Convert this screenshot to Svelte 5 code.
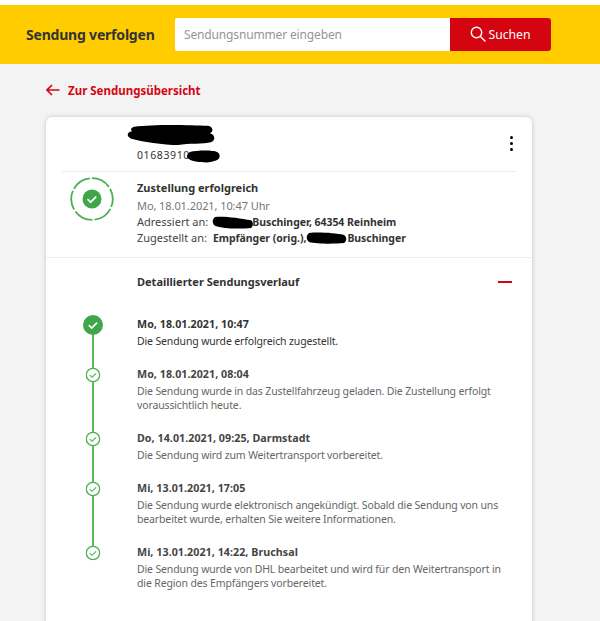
<script>
  const events = [
    { head: 'Mo, 18.01.2021, 10:47', lines: ['Die Sendung wurde erfolgreich zugestellt.'], first: true },
    { head: 'Mo, 18.01.2021, 08:04', lines: ['Die Sendung wurde in das Zustellfahrzeug geladen. Die Zustellung erfolgt', 'voraussichtlich heute.'] },
    { head: 'Do, 14.01.2021, 09:25, Darmstadt', lines: ['Die Sendung wird zum Weitertransport vorbereitet.'] },
    { head: 'Mi, 13.01.2021, 17:05', lines: ['Die Sendung wurde elektronisch angekündigt. Sobald die Sendung von uns', 'bearbeitet wurde, erhalten Sie weitere Informationen.'] },
    { head: 'Mi, 13.01.2021, 14:22, Bruchsal', lines: ['Die Sendung wurde von DHL bearbeitet und wird für den Weitertransport in', 'die Region des Empfängers vorbereitet.'], last: true }
  ];
</script>

<div class="page">
  <header class="bar">
    <h1>Sendung verfolgen</h1>
    <div class="search">
      <div class="input">Sendungsnummer eingeben</div>
      <div class="btn">
        <svg width="16" height="16" viewBox="0 0 16 16" fill="none" stroke="#fff" stroke-width="1.4">
          <circle cx="6.5" cy="6.5" r="5.2"/><path d="M10.4 10.4 15 15" stroke-linecap="round"/>
        </svg>
        <span>Suchen</span>
      </div>
    </div>
  </header>

  <div class="back">
    <svg width="14" height="12" viewBox="0 0 14 12" fill="none" stroke="#d40511" stroke-width="1.6">
      <path d="M13.5 6H1M6 1 1 6l5 5"/>
    </svg>
    <span>Zur Sendungsübersicht</span>
  </div>

  <section class="card">
    <div class="top">
      <div class="num">01683910</div>
      <svg class="blob blob-a" width="88" height="22" viewBox="-1 0 86 24" preserveAspectRatio="none"><path d="M6 3C25 0 60 1 78 2c5 1 6 6 2 8 5 1 6 8 1 10-7 2-22 1-32 3-14 0-36-4-46-7C-2 13-1 9 4 8 2 6 3 4 6 3Z" fill="#000"/></svg>
      <svg class="blob blob-b" width="33" height="13" viewBox="0 0 34 13" preserveAspectRatio="none"><path d="M3 2c8-2 24-2 28 0 4 2 3 7 0 8-5 2-10 3-16 2C9 12 1 10 0 7 0 5 1 3 3 2Z" fill="#000"/></svg>
      <div class="dots"><i></i><i></i><i></i></div>
    </div>

    <div class="status">
      <div class="ring">
        <svg width="44" height="44" viewBox="0 0 44 44" fill="none">
          <circle cx="22" cy="22" r="20.8" stroke="#4caf50" stroke-width="1.8" stroke-dasharray="19.6 2.18" stroke-dashoffset="-10.2"/>
          <circle cx="22" cy="22" r="9.5" fill="#3fa74a"/>
          <path d="M17.5 22.2l3.1 3 5.6-5.6" stroke="#fff" stroke-width="1.7"/>
        </svg>
      </div>
      <div class="info">
        <div class="title">Zustellung erfolgreich</div>
        <div class="date">Mo, 18.01.2021, 10:47 Uhr</div>
        <div class="line"><span>Adressiert an:</span><b class="b1">Buschinger, 64354 Reinheim</b>
          <svg class="blob blob-c" width="41" height="13" viewBox="0 0 41 12" preserveAspectRatio="none"><path d="M3 1c9-1 24 1 36 3 3 2 2 6 0 7-10 1-28 1-36-2C0 7 0 3 3 1Z" fill="#000"/></svg>
        </div>
        <div class="line"><span>Zugestellt an:</span><b class="b2">Empfänger (orig.),</b><b class="b3">Buschinger</b>
          <svg class="blob blob-d" width="41" height="12" viewBox="0 0 41 12" preserveAspectRatio="none"><path d="M3 1c10-1 26 0 35 2 3 2 3 6 0 8-10 1-27 1-35-1C0 8 0 3 3 1Z" fill="#000"/></svg>
        </div>
      </div>
    </div>

    <div class="acc">
      <h2>Detaillierter Sendungsverlauf</h2>
      <div class="minus"></div>
    </div>

    <ol class="timeline">
      {#each events as e}
        <li class:first={e.first} class:last={e.last}>
          <div class="mark">
            {#if e.first}
              <svg width="20" height="20" viewBox="0 0 20 20" fill="none"><circle cx="10" cy="10" r="10" fill="#3fa74a"/><path d="M5.8 10.2l2.9 2.8 5.4-5.4" stroke="#fff" stroke-width="1.7"/></svg>
            {:else}
              <svg width="15" height="15" viewBox="0 0 15 15" fill="none"><circle cx="7.5" cy="7.5" r="6.7" fill="#fff" stroke="#4caf50" stroke-width="1.3"/><path d="M4.4 7.7l2.2 2.1 4-4" stroke="#4caf50" stroke-width="1.1"/></svg>
            {/if}
          </div>
          <div class="ev">
            <div class="head">{e.head}</div>
            <p>{#each e.lines as l}<span>{l}</span>{/each}</p>
          </div>
        </li>
      {/each}
    </ol>
  </section>
</div>

<style>
  :global(body) { margin: 0; }
  .page {
    height: 621px; overflow: hidden; background: #f3f3f4; padding-top: 5px; box-sizing: border-box;
    position: relative;
    font-family: "Noto Sans", sans-serif; color: #333; font-size: 11px;
  }
  .page::before { content: ""; position: absolute; left: 0; right: 0; top: 0; height: 5px; background: #fff; }
  .bar { height: 59px; background: #ffcc00; display: flex; align-items: center; padding-left: 26px; padding-bottom: 1px; box-sizing: border-box; }
  h1 { margin: 0; width: 149px; font-size: 14px; letter-spacing: -.2px; font-weight: 700; color: #333; white-space: nowrap; }
  .search { display: flex; height: 33px; }
  .input { width: 275px; background: #fff; border-radius: 2px 0 0 2px; padding-left: 9px; box-sizing: border-box; color: #959595; font-size: 12px; letter-spacing: -.15px; line-height: 33px; }
  .btn { width: 101px; background: #d40511; border-radius: 0 3px 3px 0; color: #fff; display: flex; align-items: center; justify-content: center; gap: 2px; font-size: 12.2px; }
  .back { display: flex; align-items: center; gap: 8px; margin: 19px 0 0 46px; height: 14px; color: #d40511; font-weight: 700; font-size: 11.5px; }
  .card { margin: 20px 0 0 46px; width: 486px; height: 520px; background: #fff; border-radius: 6px; box-shadow: 0 0 4px rgba(0,0,0,.2); }
  .top { position: relative; height: 55px; margin: 0 16px; border-bottom: 1px solid #ececec; box-sizing: border-box; }
  .num { position: absolute; left: 75px; top: 32px; font-size: 10.5px; letter-spacing: .6px; line-height: 12px; color: #333; }
  .blob { position: absolute; }
  .blob-a { left: 65px; top: 7px; }
  .blob-b { left: 125px; top: 33px; }
  .dots { position: absolute; right: 3px; top: 19px; display: flex; flex-direction: column; gap: 2.5px; }
  .dots i { width: 3.4px; height: 3.4px; background: #000; border-radius: 50%; }
  .status { display: flex; height: 86px; border-bottom: 1px solid #ececec; box-sizing: border-box; }
  .ring { width: 91px; padding: 5px 0 0 24px; box-sizing: border-box; }
  .info { padding-top: 8px; }
  .title { font-weight: 700; font-size: 11px; line-height: 16px; }
  .date { color: #777; font-size: 11px; letter-spacing: -.08px; line-height: 16px; margin-top: 2px; }
  .line { position: relative; display: flex; font-size: 11px; line-height: 16px; white-space: nowrap; color: #444; }
  .line b { font-weight: 700; color: #333; font-size: 10.5px; letter-spacing: -.05px; }
  .b1 { margin-left: 44px; }
  .b2 { margin-left: 6px; }
  .b3 { margin-left: 41px; }
  .blob-c { left: 75px; top: 2px; }
  .blob-d { left: 169px; top: 2px; }
  .acc { position: relative; height: 46px; padding-left: 91px; display: flex; align-items: center; }
  h2 { margin: 0; font-size: 11px; font-weight: 700; color: #333; }
  .minus { position: absolute; right: 20px; top: 23px; width: 14px; height: 2px; background: #d40511; }
  .timeline { list-style: none; margin: 13px 0 0; padding: 0; }
  li { position: relative; padding-left: 91px; padding-bottom: 19px; }
  li::before { content: ""; position: absolute; left: 46px; top: 8px; bottom: -8px; width: 2px; background: #5cb85c; }
  li.last::before { display: none; }
  .mark { position: absolute; left: 47px; top: 8px; transform: translate(-50%, -50%); line-height: 0; }
  .head { font-weight: 700; font-size: 10.7px; letter-spacing: .05px; line-height: 14px; color: #444; }
  li.first .head { color: #333; }
  p { margin: 3px 0 0; color: #666; font-size: 10.5px; letter-spacing: -.14px; line-height: 14px; white-space: nowrap; }
  li.first p { color: #333; }
  p span { display: block; }
</style>
